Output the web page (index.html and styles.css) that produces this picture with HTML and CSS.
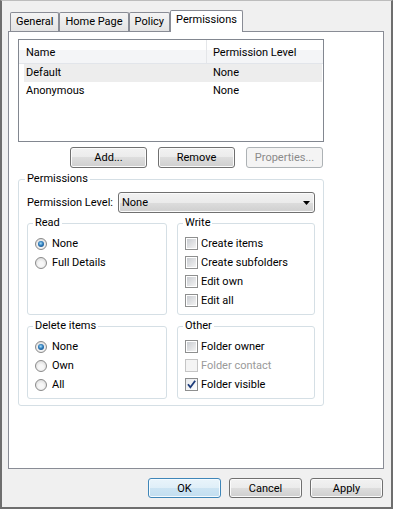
FILE: index.html
```html
<!DOCTYPE html>
<html lang="en">
<head>
    <meta charset="UTF-8">
    <meta name="viewport" content="width=device-width, initial-scale=1.0">
    <title>Folder Properties - Permissions</title>
    <link rel="stylesheet" href="styles.css">
</head>
<body>
    <div class="window">
        <div class="tabs">
            <div class="tab">General</div>
            <div class="tab">Home Page</div>
            <div class="tab">Policy</div>
            <div class="tab active">Permissions</div>
        </div>

        <div class="panel">
            <div class="list">
                <div class="list-header">
                    <div class="col-name">Name</div>
                    <div class="col-level">Permission Level</div>
                </div>
                <div class="list-row selected">
                    <div class="col-name">Default</div>
                    <div class="col-level">None</div>
                </div>
                <div class="list-row">
                    <div class="col-name">Anonymous</div>
                    <div class="col-level">None</div>
                </div>
            </div>

            <div class="list-buttons">
                <button class="btn">Add...</button>
                <button class="btn">Remove</button>
                <button class="btn" disabled>Properties...</button>
            </div>

            <fieldset class="group perms">
                <legend>Permissions</legend>
                <div class="level-row">
                    <span>Permission Level:</span>
                    <div class="combo">
                        <span>None</span>
                        <svg class="arrow" width="7" height="4" viewBox="0 0 7 4"><path d="M0 0H7L3.5 4Z" fill="#000"/></svg>
                    </div>
                </div>

                <div class="sub-grid">
                    <fieldset class="group">
                        <legend>Read</legend>
                        <div class="option"><span class="radio on"></span>None</div>
                        <div class="option"><span class="radio"></span>Full Details</div>
                    </fieldset>
                    <fieldset class="group">
                        <legend>Write</legend>
                        <div class="option"><span class="check"></span>Create items</div>
                        <div class="option"><span class="check"></span>Create subfolders</div>
                        <div class="option"><span class="check"></span>Edit own</div>
                        <div class="option"><span class="check"></span>Edit all</div>
                    </fieldset>
                    <fieldset class="group">
                        <legend>Delete items</legend>
                        <div class="option"><span class="radio on"></span>None</div>
                        <div class="option"><span class="radio"></span>Own</div>
                        <div class="option"><span class="radio"></span>All</div>
                    </fieldset>
                    <fieldset class="group">
                        <legend>Other</legend>
                        <div class="option"><span class="check"></span>Folder owner</div>
                        <div class="option disabled"><span class="check"></span>Folder contact</div>
                        <div class="option">
                            <span class="check on"><svg width="11" height="11" viewBox="0 0 11 11"><path d="M2 5.2L4.4 8.3L9.2 1.8" fill="none" stroke="#1d3c7a" stroke-width="1.8"/></svg></span>Folder visible
                        </div>
                    </fieldset>
                </div>
            </fieldset>
        </div>

        <div class="footer">
            <button class="btn default">OK</button>
            <button class="btn">Cancel</button>
            <button class="btn">Apply</button>
        </div>
    </div>
</body>
</html>
```

FILE: styles.css
```css
body {
    margin: 0;
    font-family: Roboto, "Noto Sans", sans-serif;
    font-size: 11px;
    color: #000;
    background: #f0f0f0;
}
.window {
    width: 393px;
    height: 509px;
    box-sizing: border-box;
    border: 2px solid #6e6e6e;
    border-top: 1px solid #bdbdbd;
    background: #f0f0f0;
    padding: 0 7px 0 6px;
}

/* tabs */
.tabs {
    display: flex;
    align-items: flex-end;
    padding: 9px 0 0 2px;
    position: relative;
    z-index: 1;
}
.tab {
    height: 19px;
    box-sizing: border-box;
    border: 1px solid #898c95;
    border-bottom: none;
    border-radius: 2px 2px 0 0;
    background: linear-gradient(#f4f4f4, #e3e3e3);
    padding: 0 5px;
    line-height: 17px;
    white-space: nowrap;
}
.tab.active {
    height: 22px;
    margin-bottom: -1px;
    background: #fff;
    line-height: 18px;
}
.panel {
    height: 438px;
    box-sizing: border-box;
    border: 1px solid #898c95;
    background: #fff;
    padding: 7px 0 0 9px;
}

/* list view */
.list {
    width: 306px;
    height: 103px;
    box-sizing: border-box;
    border: 1px solid #828790;
    background: #fff;
}
.list-header {
    display: flex;
    height: 24px;
    box-sizing: border-box;
    border-bottom: 1px solid #e2e5ea;
    background: linear-gradient(#fff 45%, #f4f5f7 45%);
}
.list-header .col-name {
    width: 188px;
    box-sizing: border-box;
    padding: 2px 0 0 7px;
    border-right: 1px solid #e4e6e9;
    line-height: 21px;
}
.list-header .col-level {
    padding: 2px 0 0 6px;
    line-height: 21px;
}
.list-row {
    display: flex;
    height: 18px;
    line-height: 18px;
    margin: 0 1px 0 5px;
}
.list-row .col-name {
    width: 182px;
    box-sizing: border-box;
    padding-left: 2px;
}
.list-row .col-level {
    padding-left: 7px;
}
.list-row.selected {
    background: #ededed;
}

/* buttons */
.list-buttons {
    display: flex;
    justify-content: flex-end;
    gap: 11px;
    width: 305px;
    margin-top: 5px;
}
.btn {
    width: 77px;
    height: 21px;
    padding: 0;
    font: inherit;
    color: #000;
    border: 1px solid #707070;
    border-radius: 3px;
    background: linear-gradient(#f2f2f2 0%, #ebebeb 50%, #dddddd 50%, #cfcfcf 100%);
    box-shadow: inset 0 0 0 1px #fbfbfb;
}
.btn:disabled {
    color: #8a8a8a;
    border-color: #adb2b5;
    background: #f4f4f4;
    box-shadow: none;
}
.btn.default {
    border-color: #3f86b8;
    background: linear-gradient(#e9f4fb 0%, #dfeff8 50%, #cce4f3 50%, #c2def0 100%);
    box-shadow: inset 0 0 0 1px #f4fbff;
}

/* group boxes */
.group {
    margin: 0;
    min-width: 0;
    border: 1px solid #d5dfe5;
    border-radius: 3px;
}
.group legend {
    padding: 0 2px;
    margin-left: -2px;
    line-height: 16px;
}
.perms {
    width: 306px;
    box-sizing: border-box;
    margin-top: 3px;
    padding: 5px 8px 6px;
}
.level-row {
    display: flex;
    align-items: center;
    justify-content: space-between;
}
.combo {
    width: 197px;
    height: 21px;
    box-sizing: border-box;
    display: flex;
    align-items: center;
    justify-content: space-between;
    padding: 0 4px 0 3px;
    border: 1px solid #707070;
    border-radius: 3px;
    background: linear-gradient(#f2f2f2 0%, #ebebeb 50%, #dddddd 50%, #cfcfcf 100%);
    box-shadow: inset 0 0 0 1px #fbfbfb;
}
.arrow {
    display: block;
}
.sub-grid {
    display: grid;
    grid-template-columns: 140px 138px;
    gap: 3px 10px;
    margin-top: 2px;
}
.sub-grid .group {
    padding: 3px 7px 4px;
}
.option {
    display: flex;
    align-items: center;
    height: 19px;
    white-space: nowrap;
}
.option.disabled {
    color: #9a9a9a;
}

/* radio and check boxes */
.radio {
    width: 12px;
    height: 12px;
    box-sizing: border-box;
    border-radius: 50%;
    border: 1px solid #8a8a8a;
    background: radial-gradient(circle at 50% 60%, #f7f7f7 30%, #d2d2d2 100%);
    margin-right: 5px;
    display: flex;
    align-items: center;
    justify-content: center;
    flex: none;
}
.radio.on::after {
    content: "";
    width: 6px;
    height: 6px;
    border-radius: 50%;
    background: radial-gradient(circle at 45% 40%, #a6e0fa 0, #2f7bba 45%, #0d3f74 100%);
}
.check {
    width: 13px;
    height: 13px;
    box-sizing: border-box;
    border: 1px solid #8e8f8f;
    padding: 1px;
    background: linear-gradient(135deg, #c9ccd1, #f3f3f3) content-box, #fff;
    margin-right: 3px;
    flex: none;
}
.check.on {
    padding: 0;
    background: linear-gradient(135deg, #e6e8eb, #fff);
}
.check svg {
    display: block;
}
.option.disabled .check {
    border-color: #c5c5c5;
    background: #f4f4f4;
}

/* dialog buttons */
.footer {
    display: flex;
    justify-content: flex-end;
    gap: 8px;
    padding: 9px 1px 0 0;
}
.footer .btn {
    width: 73px;
    height: 20px;
}
```
